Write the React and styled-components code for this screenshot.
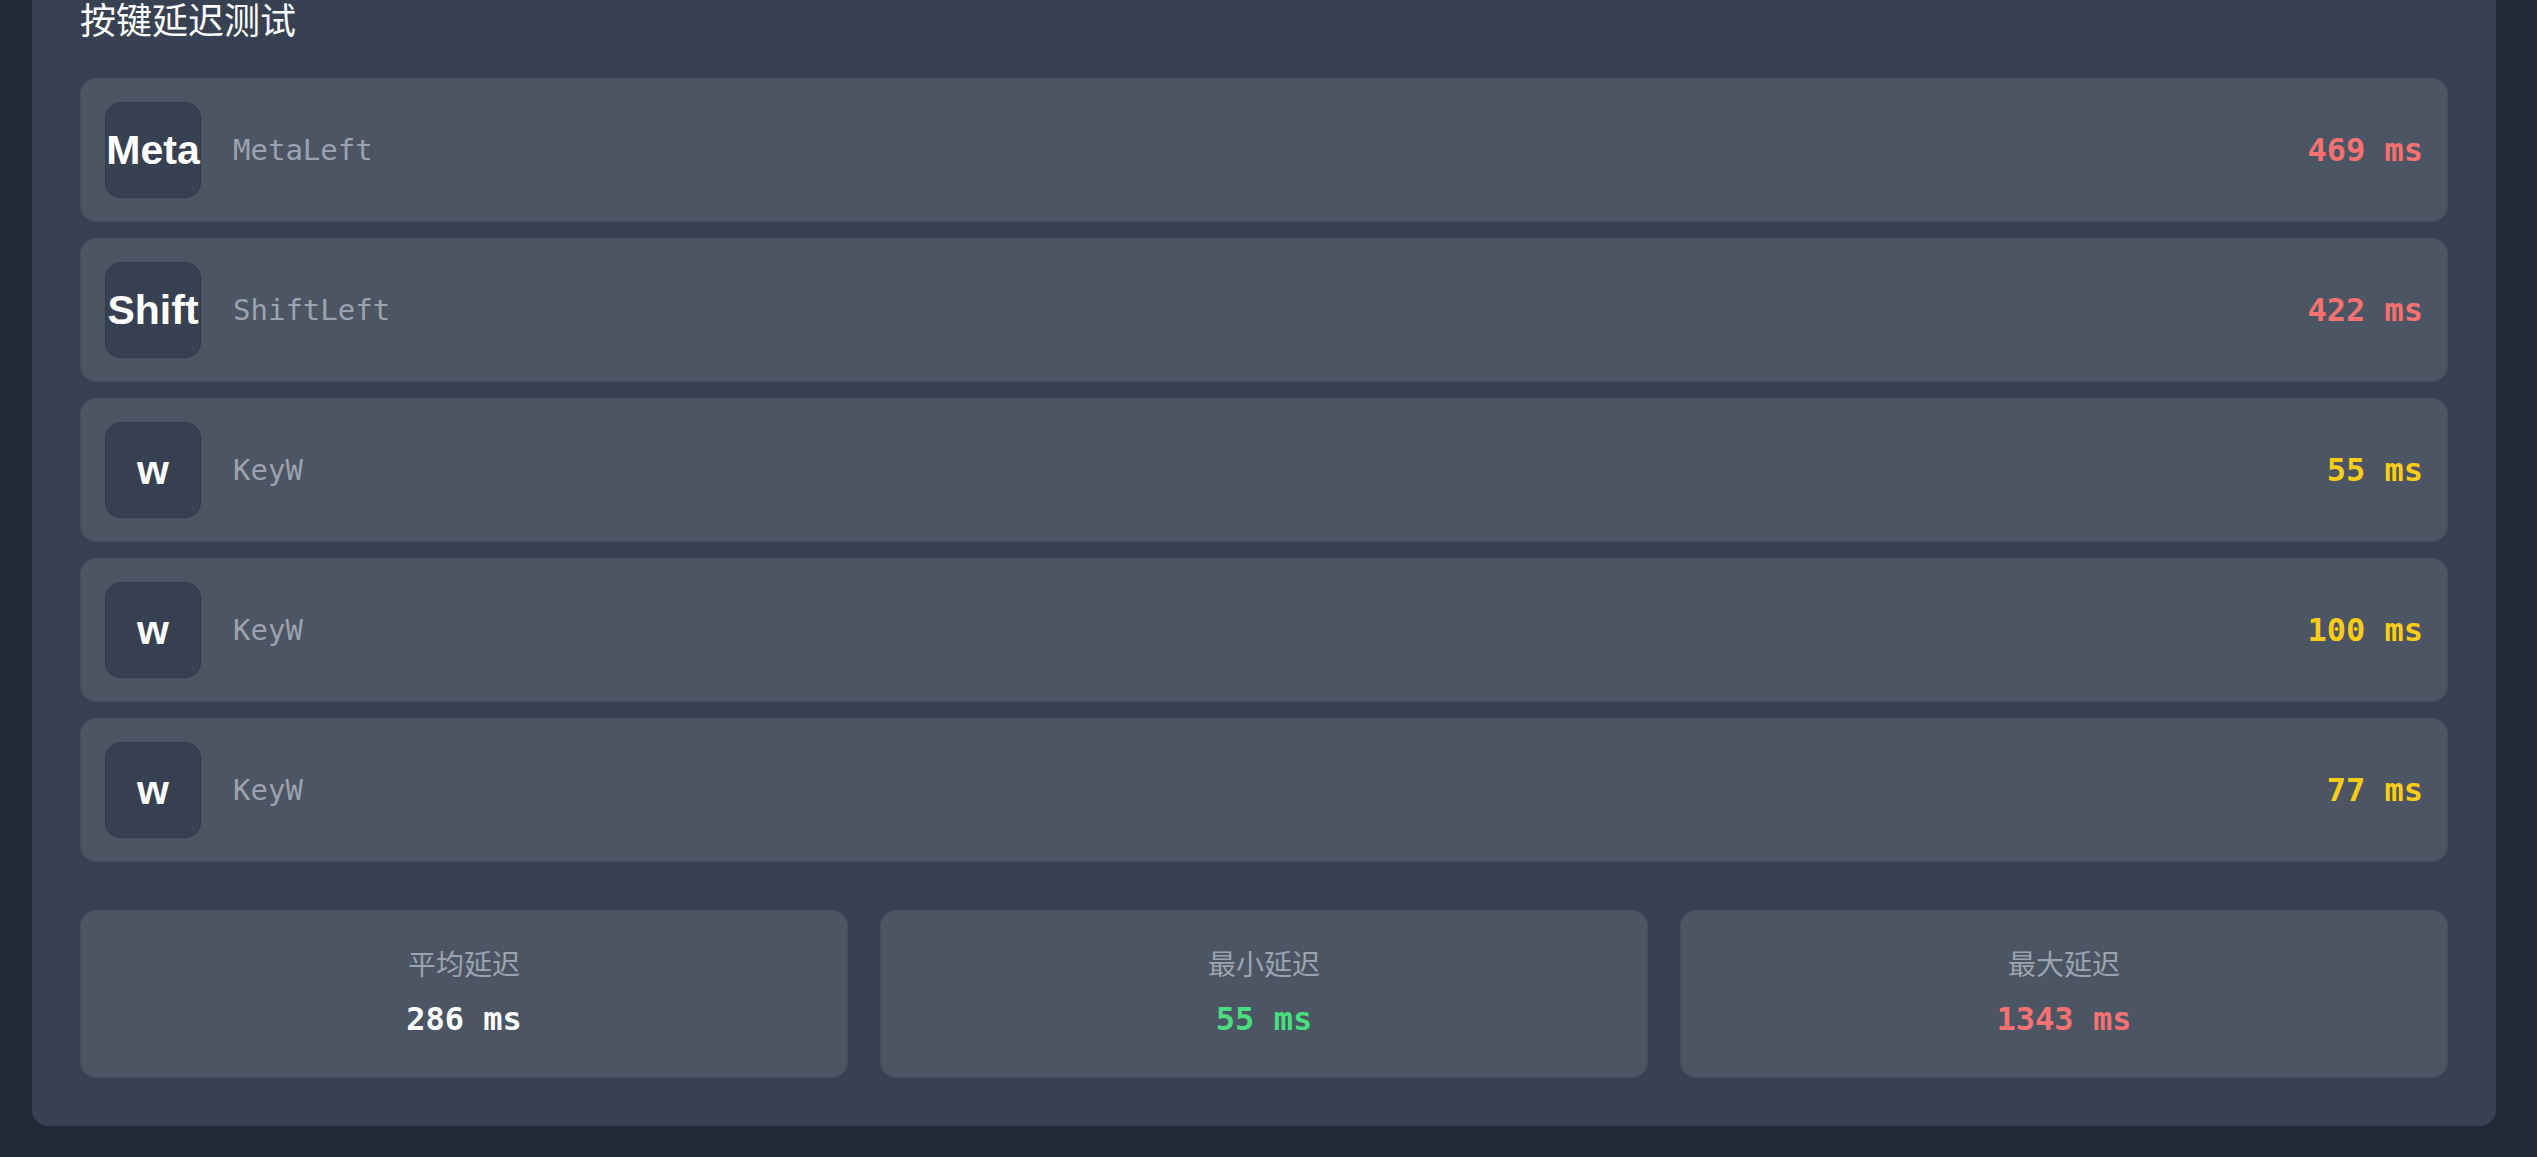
import styled, { createGlobalStyle } from "styled-components";

const GlobalStyle = createGlobalStyle`
  html, body {
    margin: 0;
    padding: 0;
    background: #1f2937;
  }
  body {
    font-family: "Noto Sans", "Noto Sans CJK SC", sans-serif;
    overflow: hidden;
  }
`;

const Page = styled.div`
  padding: 0 41px 31px 32px;
  min-height: 1157px;
  box-sizing: border-box;
`;

const Card = styled.section`
  margin-top: -58px;
  background: #374151;
  border-radius: 16px;
  padding: 48px;
`;

const Title = styled.h2`
  margin: 0 0 32px;
  font-family: "Noto Sans CJK SC", sans-serif;
  font-weight: 400;
  font-size: 36px;
  line-height: 56px;
  color: #ffffff;
`;

const List = styled.div`
  display: flex;
  flex-direction: column;
  gap: 16px;
`;

const Row = styled.div`
  display: flex;
  align-items: center;
  gap: 32px;
  height: 144px;
  box-sizing: border-box;
  padding: 24px;
  background: #4b5563;
  border: 1px solid rgba(55, 65, 81, 0.35);
  border-radius: 16px;
`;

const KeyCap = styled.div`
  flex: none;
  width: 96px;
  height: 96px;
  display: flex;
  align-items: center;
  justify-content: center;
  background: #374151;
  border: 1px solid rgba(31, 41, 55, 0.3);
  border-radius: 16px;
  box-sizing: border-box;
  font-family: "Liberation Sans", Arial, sans-serif;
  font-weight: 700;
  font-size: 41px;
  color: #ffffff;
  white-space: nowrap;
`;

const Code = styled.span`
  flex: 1;
  font-family: "DejaVu Sans Mono", monospace;
  font-size: 29px;
  color: #9ca3af;
`;

const palette = {
  red: "#f87171",
  yellow: "#facc15",
  green: "#4ade80",
  white: "#ffffff",
};

const Ms = styled.span`
  font-family: "DejaVu Sans Mono", monospace;
  font-weight: 700;
  font-size: 32px;
  color: ${(p) => palette[p.$tone]};
`;

const Stats = styled.div`
  display: grid;
  grid-template-columns: repeat(3, 1fr);
  gap: 32px;
  margin-top: 48px;
`;

const StatBox = styled.div`
  height: 168px;
  box-sizing: border-box;
  padding: 32px;
  background: #4b5563;
  border: 1px solid rgba(55, 65, 81, 0.35);
  border-radius: 16px;
  text-align: center;
`;

const StatLabel = styled.div`
  font-family: "Noto Sans CJK SC", sans-serif;
  font-size: 28px;
  line-height: 40px;
  color: #9ca3af;
`;

const StatValue = styled(Ms)`
  display: block;
  margin-top: 8px;
  line-height: 56px;
`;

const presses = [
  { key: "Meta", code: "MetaLeft", ms: 469 },
  { key: "Shift", code: "ShiftLeft", ms: 422 },
  { key: "w", code: "KeyW", ms: 55 },
  { key: "w", code: "KeyW", ms: 100 },
  { key: "w", code: "KeyW", ms: 77 },
];

const toneFor = (ms) => (ms > 200 ? "red" : ms > 30 ? "yellow" : "green");

export default function App() {
  return (
    <Page>
      <GlobalStyle />
      <Card>
        <Title>按键延迟测试</Title>
        <List>
          {presses.map((p, i) => (
            <Row key={i}>
              <KeyCap>{p.key}</KeyCap>
              <Code>{p.code}</Code>
              <Ms $tone={toneFor(p.ms)}>{p.ms} ms</Ms>
            </Row>
          ))}
        </List>
        <Stats>
          <StatBox>
            <StatLabel>平均延迟</StatLabel>
            <StatValue $tone="white">286 ms</StatValue>
          </StatBox>
          <StatBox>
            <StatLabel>最小延迟</StatLabel>
            <StatValue $tone="green">55 ms</StatValue>
          </StatBox>
          <StatBox>
            <StatLabel>最大延迟</StatLabel>
            <StatValue $tone="red">1343 ms</StatValue>
          </StatBox>
        </Stats>
      </Card>
    </Page>
  );
}
